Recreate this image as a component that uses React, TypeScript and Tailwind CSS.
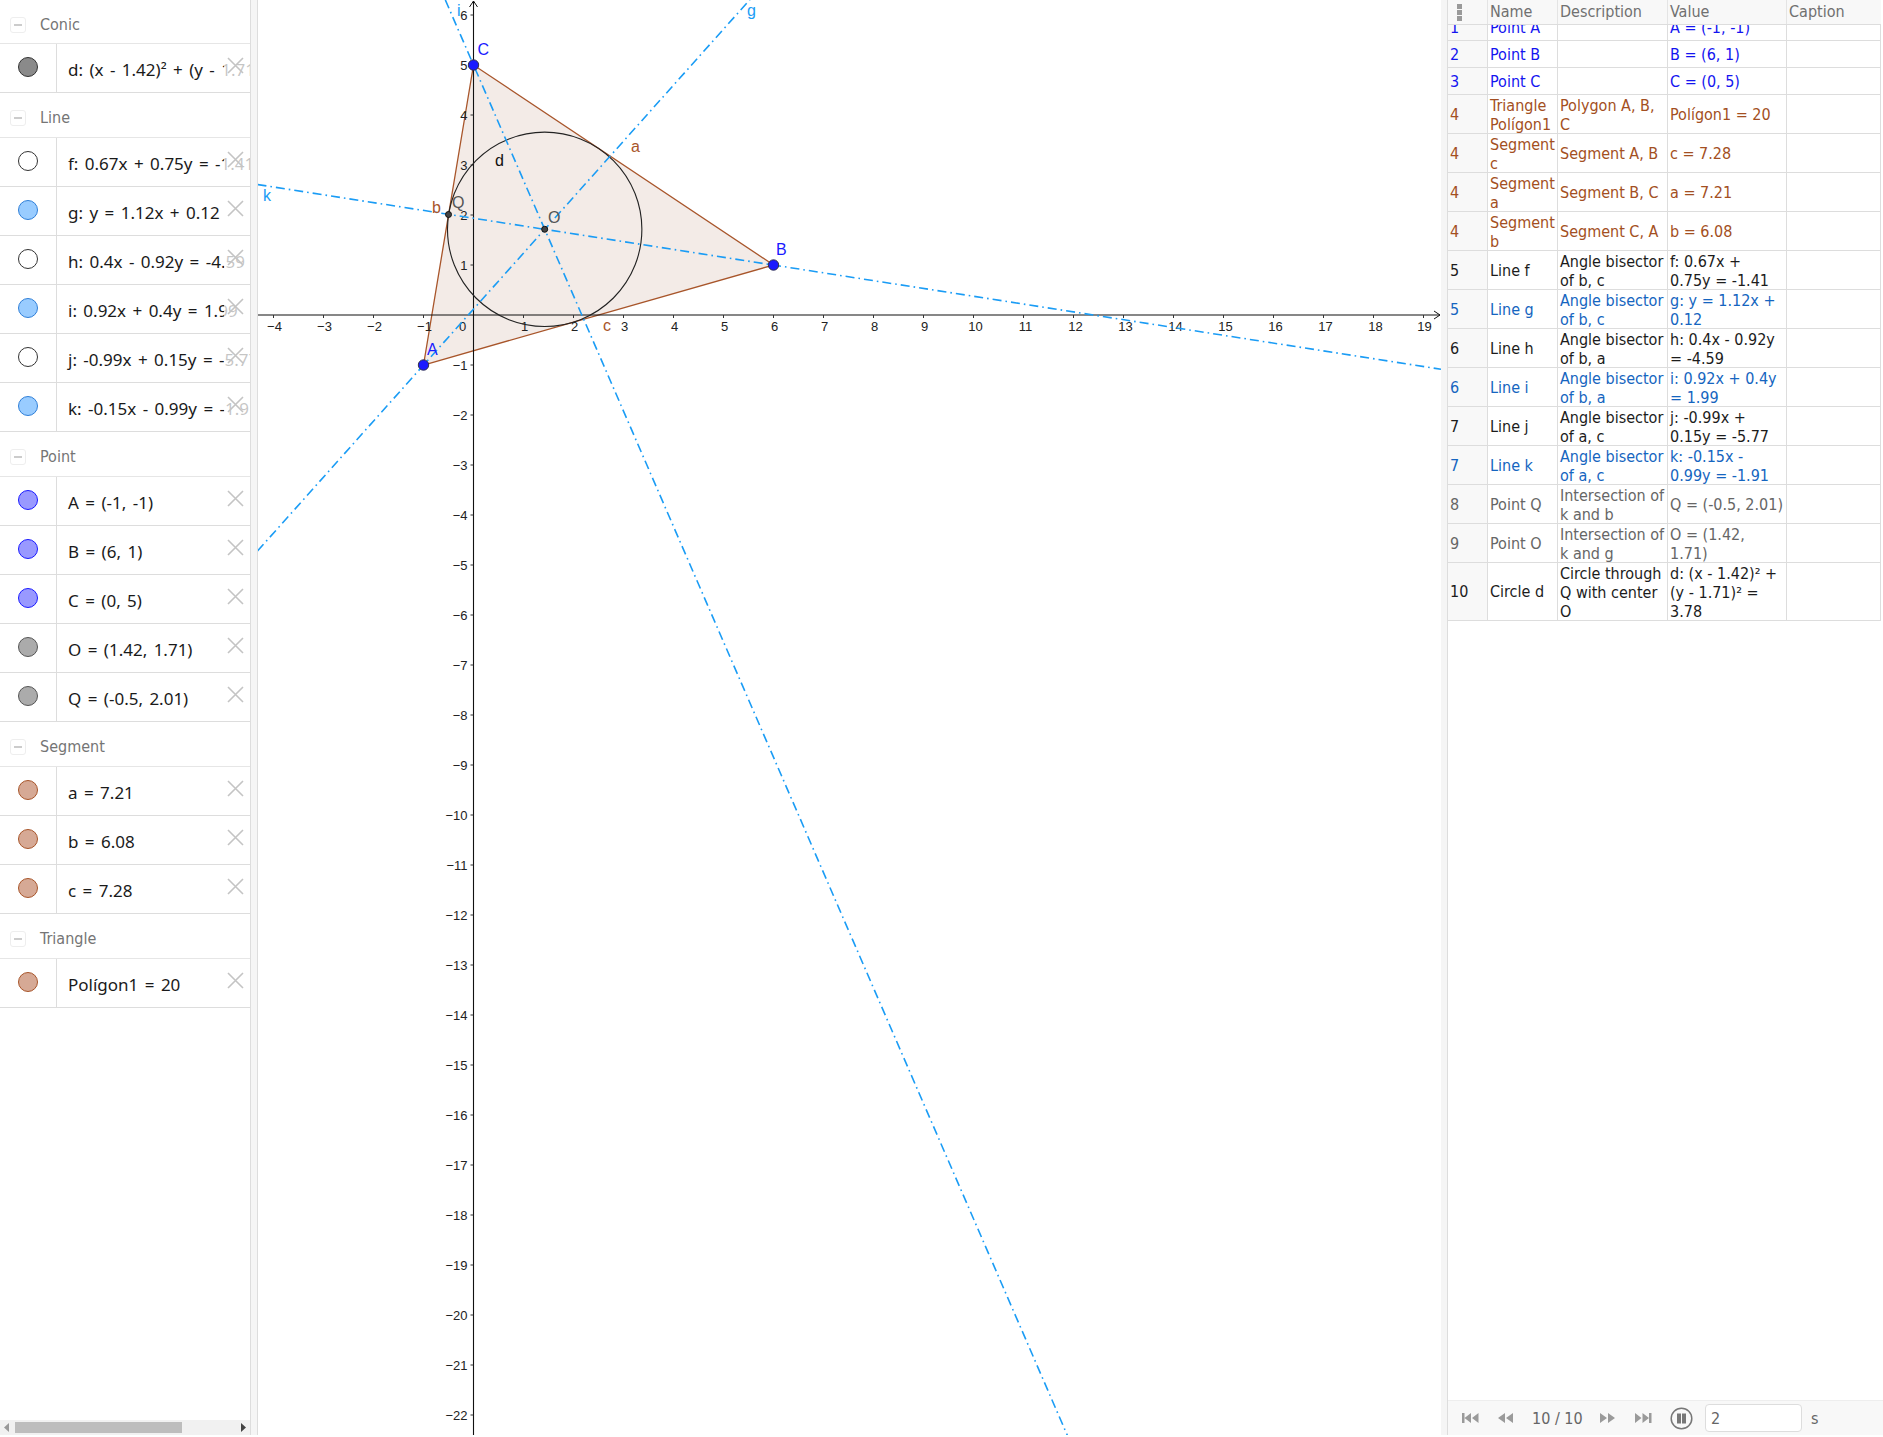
import React from "react";

const OX = 215.5;
const OY = 315;
const U = 50;
const px = (x: number) => OX + U * x;
const py = (y: number) => OY - U * y;

const BLUE = { ring: "border-[#1a1aff]", fill: "bg-[#9999ff]" };
const GRAY = { ring: "border-[#555555]", fill: "bg-[#ababab]" };
const BROWN = { ring: "border-[#a8552a]", fill: "bg-[#d6a995]" };
const LBLUE = { ring: "border-[#2f7fd8]", fill: "bg-[#99ccff]" };
const NONE = { ring: "border-[#333333]", fill: "bg-white" };

const groups: { title: string; head: string; items: { text: string; ring: string; fill: string }[] }[] = [
  { title: "Conic", head: "h-[44px]", items: [{ text: "d: (x - 1.42)² + (y - 1.71)² = 3.78", ring: "border-[#333333]", fill: "bg-[#8a8a8a]" }] },
  {
    title: "Line",
    head: "h-[45px]",
    items: [
      { text: "f: 0.67x + 0.75y = -1.41", ...NONE },
      { text: "g: y = 1.12x + 0.12", ...LBLUE },
      { text: "h: 0.4x - 0.92y = -4.59", ...NONE },
      { text: "i: 0.92x + 0.4y = 1.99", ...LBLUE },
      { text: "j: -0.99x + 0.15y = -5.77", ...NONE },
      { text: "k: -0.15x - 0.99y = -1.91", ...LBLUE },
    ],
  },
  {
    title: "Point",
    head: "h-[45px]",
    items: [
      { text: "A = (-1, -1)", ...BLUE },
      { text: "B = (6, 1)", ...BLUE },
      { text: "C = (0, 5)", ...BLUE },
      { text: "O = (1.42, 1.71)", ...GRAY },
      { text: "Q = (-0.5, 2.01)", ...GRAY },
    ],
  },
  {
    title: "Segment",
    head: "h-[45px]",
    items: [
      { text: "a = 7.21", ...BROWN },
      { text: "b = 6.08", ...BROWN },
      { text: "c = 7.28", ...BROWN },
    ],
  },
  { title: "Triangle", head: "h-[45px]", items: [{ text: "Polígon1 = 20", ...BROWN }] },
];

const C_BLUE = "text-[#1414f0]";
const C_BROWN = "text-[#a34f22]";
const C_BLACK = "text-[#1c1c1c]";
const C_LINE = "text-[#1565c0]";
const C_GRAY = "text-[#666666]";

const rows: { n: string; name: string; desc: string; val: string; c: string }[] = [
  { n: "1", name: "Point A", desc: "", val: "A = (-1, -1)", c: C_BLUE },
  { n: "2", name: "Point B", desc: "", val: "B = (6, 1)", c: C_BLUE },
  { n: "3", name: "Point C", desc: "", val: "C = (0, 5)", c: C_BLUE },
  { n: "4", name: "Triangle\nPolígon1", desc: "Polygon A, B,\nC", val: "Polígon1 = 20", c: C_BROWN },
  { n: "4", name: "Segment\nc", desc: "Segment A, B", val: "c = 7.28", c: C_BROWN },
  { n: "4", name: "Segment\na", desc: "Segment B, C", val: "a = 7.21", c: C_BROWN },
  { n: "4", name: "Segment\nb", desc: "Segment C, A", val: "b = 6.08", c: C_BROWN },
  { n: "5", name: "Line f", desc: "Angle bisector\nof b, c", val: "f: 0.67x +\n0.75y = -1.41", c: C_BLACK },
  { n: "5", name: "Line g", desc: "Angle bisector\nof b, c", val: "g: y = 1.12x +\n0.12", c: C_LINE },
  { n: "6", name: "Line h", desc: "Angle bisector\nof b, a", val: "h: 0.4x - 0.92y\n= -4.59", c: C_BLACK },
  { n: "6", name: "Line i", desc: "Angle bisector\nof b, a", val: "i: 0.92x + 0.4y\n= 1.99", c: C_LINE },
  { n: "7", name: "Line j", desc: "Angle bisector\nof a, c", val: "j: -0.99x +\n0.15y = -5.77", c: C_BLACK },
  { n: "7", name: "Line k", desc: "Angle bisector\nof a, c", val: "k: -0.15x -\n0.99y = -1.91", c: C_LINE },
  { n: "8", name: "Point Q", desc: "Intersection of\nk and b", val: "Q = (-0.5, 2.01)", c: C_GRAY },
  { n: "9", name: "Point O", desc: "Intersection of\nk and g", val: "O = (1.42,\n1.71)", c: C_GRAY },
  { n: "10", name: "Circle d", desc: "Circle through\nQ with center\nO", val: "d: (x - 1.42)² +\n(y - 1.71)² =\n3.78", c: C_BLACK },
];

function Group({ g }: { g: (typeof groups)[number] }) {
  return (
    <div>
      <div className={`${g.head} flex items-center border-b border-[#e6e6e6] pt-[6px]`}>
        <span className="ml-[10px] mr-[14px] flex h-[16px] w-[16px] items-center justify-center rounded-[3px] border border-[#eeeeee]">
          <span className="h-[2px] w-[8px] bg-[#cccccc]" />
        </span>
        <span className="text-[16px] text-[#757575]">{g.title}</span>
      </div>
      {g.items.map((it) => (
        <div key={it.text} className="relative flex h-[49px] overflow-hidden border-b border-[#dddddd]">
          <div className="flex w-[57px] shrink-0 justify-center border-r border-[#dddddd] pt-[13px]">
            <span className={`h-[20px] w-[20px] rounded-full border ${it.ring} ${it.fill}`} />
          </div>
          <div className="whitespace-nowrap pl-[11px] pt-[14px] font-['Noto_Sans',sans-serif] text-[17px] leading-[23px] text-[#1a1a1a] [word-spacing:2px]">
            {it.text}
          </div>
          <div className="absolute right-0 top-0 h-full w-[26px] bg-white/75">
            <svg className="absolute left-[3px] top-[13px]" width="17" height="17" viewBox="0 0 17 17">
              <path d="M1 1 L16 16 M16 1 L1 16" stroke="#c4c4c4" strokeWidth="1.6" fill="none" />
            </svg>
          </div>
        </div>
      ))}
    </div>
  );
}

function Sidebar() {
  return (
    <div className="flex h-full w-[251px] shrink-0 flex-col border-r border-[#dddddd] bg-white">
      <div className="flex-1 overflow-hidden">
        {groups.map((g) => (
          <Group key={g.title} g={g} />
        ))}
      </div>
      <div className="relative h-[15px] bg-[#f1f1f1]">
        <div className="absolute left-[15px] top-[2px] h-[11px] w-[167px] bg-[#bdbdbd]" />
        <svg className="absolute left-[4px] top-[3px]" width="6" height="9" viewBox="0 0 6 9">
          <path d="M5 0 L0 4.5 L5 9 Z" fill="#999999" />
        </svg>
        <svg className="absolute left-[240px] top-[3px]" width="6" height="9" viewBox="0 0 6 9">
          <path d="M1 0 L6 4.5 L1 9 Z" fill="#444444" />
        </svg>
      </div>
    </div>
  );
}

function Canvas() {
  const W = 1183;
  const H = 1435;
  const xt: number[] = [];
  for (let i = -4; i <= 19; i++) if (i !== 0) xt.push(i);
  const yt: number[] = [];
  for (let i = -22; i <= 6; i++) if (i !== 0) yt.push(i);
  const A: [number, number] = [-1, -1];
  const B: [number, number] = [6, 1];
  const C: [number, number] = [0, 5];
  const O: [number, number] = [1.4236, 1.7144];
  const Q: [number, number] = [-0.5, 2.01];
  const dash = "9 4 1.6 4";
  const line = (a: number, b: number, c: number, d: number) => (
    <line x1={px(a)} y1={py(b)} x2={px(c)} y2={py(d)} stroke="#1a9cf5" strokeWidth="1.6" strokeDasharray={dash} />
  );
  const lbl = "font-['Liberation_Sans',sans-serif]";
  return (
    <div className="relative h-full w-[1183px] shrink-0 overflow-hidden bg-white">
      <svg className="absolute inset-0" width={W} height={H} viewBox={`0 0 ${W} ${H}`}>
        <polygon
          points={`${px(A[0])},${py(A[1])} ${px(B[0])},${py(B[1])} ${px(C[0])},${py(C[1])}`}
          fill="#f3ebe7"
          stroke="#a8552a"
          strokeWidth="1.3"
        />
        <line x1="0" y1={OY} x2={W - 1} y2={OY} stroke="#111111" strokeWidth="1.1" />
        <line x1={OX} y1={H} x2={OX} y2="1" stroke="#111111" strokeWidth="1.1" />
        <path d={`M${W - 7} ${OY - 4} L${W - 1} ${OY} L${W - 7} ${OY + 4}`} fill="none" stroke="#111111" strokeWidth="1" />
        <path d={`M${OX - 4} 7 L${OX} 1 L${OX + 4} 7`} fill="none" stroke="#111111" strokeWidth="1" />
        {xt.map((t) => (
          <g key={t}>
            <line x1={px(t)} y1={OY} x2={px(t)} y2={OY + 3} stroke="#333333" strokeWidth="1" />
            <text x={px(t) + (t >= 10 && t < 19 ? 2 : 1)} y={OY + 16} textAnchor="middle" className={`${lbl} fill-[#222222] text-[13px]`}>
              {t < 0 ? `−${-t}` : t}
            </text>
          </g>
        ))}
        <text x={OX - 11} y={OY + 16} textAnchor="middle" className={`${lbl} fill-[#222222] text-[13px]`}>0</text>
        {yt.map((t) => (
          <g key={t}>
            <line x1={OX - 3} y1={py(t)} x2={OX} y2={py(t)} stroke="#333333" strokeWidth="1" />
            <text x={OX - 6} y={py(t) + 4.5} textAnchor="end" className={`${lbl} fill-[#222222] text-[13px]`}>
              {t < 0 ? `−${-t}` : t}
            </text>
          </g>
        ))}
        <circle cx={px(O[0])} cy={py(O[1])} r={1.944 * U} fill="none" stroke="#222222" strokeWidth="1.1" />
        {line(-4.32, -4.72, 5.53, 6.31)}
        {line(-0.563, 6.3, 11.9, -22.46)}
        {line(-4.32, 2.61, 19.35, -1.085)}
        {[A, B, C].map((p, i) => (
          <circle key={i} cx={px(p[0])} cy={py(p[1])} r="5.2" fill="#1a1aff" stroke="#33334d" strokeWidth="1" />
        ))}
        {[O, Q].map((p, i) => (
          <circle key={i} cx={px(p[0])} cy={py(p[1])} r="3" fill="#444444" stroke="#111111" strokeWidth="1" />
        ))}
        <g className={`${lbl} text-[16px]`}>
          <text x="219.5" y="55" className="fill-[#1a1aff]">C</text>
          <text x="518" y="255" className="fill-[#1a1aff]">B</text>
          <text x="169" y="355" className="fill-[#1a1aff]">A</text>
          <text x="373" y="152" className="fill-[#a8552a]">a</text>
          <text x="174" y="213" className="fill-[#a8552a]">b</text>
          <text x="345" y="331" className="fill-[#a8552a]">c</text>
          <text x="237" y="166" className="fill-[#111111]">d</text>
          <text x="194" y="208" className="fill-[#555555]">Q</text>
          <text x="290" y="223" className="fill-[#555555]">O</text>
          <text x="5" y="201" className="fill-[#1a9cf5]">k</text>
          <text x="199" y="16" className="fill-[#1a9cf5]">i</text>
          <text x="489" y="16" className="fill-[#1a9cf5]">g</text>
        </g>
      </svg>
    </div>
  );
}

function Player() {
  const ic = "#9a9a9a";
  return (
    <div className="flex h-[35px] shrink-0 items-center border-t border-[#eeeeee] bg-[#f8f8f8] text-[16px] text-[#666666]">
      <svg className="ml-[14px]" width="17" height="12" viewBox="0 0 17 12">
        <path d="M0 1h2.5v10H0z M9 1v10L2.5 6z M16.5 1v10L10 6z" fill={ic} />
      </svg>
      <svg className="ml-[18px]" width="17" height="12" viewBox="0 0 17 12">
        <path d="M8 1v10L1 6z M16 1v10L9 6z" fill={ic} />
      </svg>
      <span className="ml-[18px] w-[50px] whitespace-nowrap">10 / 10</span>
      <svg className="ml-[17px]" width="17" height="12" viewBox="0 0 17 12">
        <path d="M1 1v10L8 6z M9 1v10L16 6z" fill={ic} />
      </svg>
      <svg className="ml-[19px]" width="17" height="12" viewBox="0 0 17 12">
        <path d="M0 1v10L6.5 6z M7.5 1v10L14 6z M14 1h2.5v10H14z" fill={ic} />
      </svg>
      <svg className="ml-[18px]" width="23" height="23" viewBox="0 0 23 23">
        <circle cx="11.5" cy="11.5" r="10.3" fill="none" stroke="#777777" strokeWidth="1.5" />
        <rect x="7" y="6.5" width="4" height="10" fill="#777777" />
        <rect x="12" y="6.5" width="4" height="10" fill="#777777" />
      </svg>
      <div className="ml-[12px] flex h-[28px] w-[97px] items-center rounded-[4px] border border-[#dddddd] bg-white pl-[5px]">2</div>
      <span className="ml-[9px]">s</span>
    </div>
  );
}

function Txt({ s }: { s: string }) {
  return <div className={s.includes("\n") ? "translate-y-[1px]" : ""}>{s}</div>;
}

function TablePane() {
  const cell = "h-[27px] overflow-hidden border-b border-r border-[#dddddd] px-[2px] py-0 align-middle whitespace-pre";
  return (
    <div className="flex h-full w-[436px] shrink-0 flex-col border-l border-[#dddddd] bg-white font-['DejaVu_Sans_Condensed','DejaVu_Sans',sans-serif] text-[16px] leading-[19px]">
      <div className="mr-[2px] grid h-[25px] shrink-0 grid-cols-[40px_70px_110px_119px_1fr] border-b border-[#dddddd] bg-[#f8f8f8] text-[#707070]">
        <div className="flex items-center border-r border-[#e4e4e4] pl-[9px]">
          <div className="flex flex-col gap-[1px]">
            <span className="h-[5px] w-[5px] bg-[#9a9a9a]" />
            <span className="h-[5px] w-[5px] bg-[#9a9a9a]" />
            <span className="h-[5px] w-[5px] bg-[#9a9a9a]" />
          </div>
        </div>
        <div className="border-r border-[#e4e4e4] pl-[2px] pt-[2px]">Name</div>
        <div className="border-r border-[#e4e4e4] pl-[2px] pt-[2px]">Description</div>
        <div className="border-r border-[#e4e4e4] pl-[2px] pt-[2px]">Value</div>
        <div className="pl-[2px] pt-[2px]">Caption</div>
      </div>
      <div className="flex-1 overflow-hidden pr-[2px]">
        <table className="-mt-[11px] w-full table-fixed border-separate border-spacing-0">
          <colgroup>
            <col className="w-[40px]" />
            <col className="w-[70px]" />
            <col className="w-[110px]" />
            <col className="w-[119px]" />
            <col />
          </colgroup>
          <tbody>
            {rows.map((r, i) => (
              <tr key={i} className={r.c}>
                <td className={`${cell} bg-[#f8f8f8]`}>{r.n}</td>
                <td className={cell}><Txt s={r.name} /></td>
                <td className={cell}><Txt s={r.desc} /></td>
                <td className={cell}><Txt s={r.val} /></td>
                <td className={cell}></td>
              </tr>
            ))}
          </tbody>
        </table>
      </div>
      <Player />
    </div>
  );
}

export default function App() {
  return (
    <div className="flex h-[1437px] w-[1883px] overflow-hidden bg-white font-['DejaVu_Sans_Condensed','DejaVu_Sans',sans-serif]">
      <div className="flex h-[1435px] w-full">
        <Sidebar />
        <div className="h-full w-[7px] shrink-0 border-r border-[#dddddd] bg-[#f5f5f5]" />
        <Canvas />
        <div className="h-full w-[6px] shrink-0 bg-[#f5f5f5]" />
        <TablePane />
      </div>
    </div>
  );
}
